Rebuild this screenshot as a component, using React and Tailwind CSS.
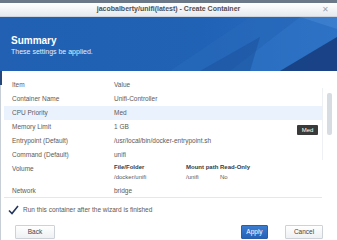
import React from "react";

const rows = [
  { item: "Container Name", value: "Unifi-Controller" },
  { item: "CPU Priority", value: "Med", active: true },
  { item: "Memory Limit", value: "1 GB" },
  { item: "Entrypoint (Default)", value: "/usr/local/bin/docker-entrypoint.sh" },
  { item: "Command (Default)", value: "unifi" },
];

const HeaderArt = () => (
  <svg className="absolute inset-0" width="337" height="54" viewBox="0 0 337 54" preserveAspectRatio="none">
    <defs>
      <linearGradient id="hb" x1="0" y1="0" x2="1" y2="0">
        <stop offset="0" stopColor="#2160b2" />
        <stop offset="0.6" stopColor="#2062b5" />
        <stop offset="1" stopColor="#2a6cc0" />
      </linearGradient>
    </defs>
    <rect width="337" height="54" fill="url(#hb)" />
    <polygon points="170,54 250,0 300,0 230,54" fill="#2869bb" opacity="0.6" />
    <polygon points="230,54 300,0 337,0 337,20 280,54" fill="#3277c8" opacity="0.55" />
    <polygon points="280,54 337,20 337,54" fill="#173f80" opacity="0.9" />
    <polygon points="300,0 337,0 337,12" fill="#4a8ad6" opacity="0.5" />
    <polygon points="200,54 260,20 250,54" fill="#1a4f9a" opacity="0.5" />
  </svg>
);

const Btn = ({ children, primary, className = "" }) => (
  <div
    className={`h-[14px] flex items-center justify-center text-[6.5px] rounded-[1px] border ${
      primary
        ? "bg-gradient-to-b from-[#3b7bd0] to-[#2663b8] border-[#2a5fa8] text-white"
        : "bg-gradient-to-b from-white to-[#eef0f3] border-[#cdd2d8] text-[#444]"
    } ${className}`}
  >
    {children}
  </div>
);

export default function App() {
  return (
    <div
      className="w-[337px] h-[240px] bg-white overflow-hidden relative text-[#5a5a5a]"
      style={{ fontFamily: '"Liberation Sans", Arial, sans-serif' }}
    >
      <div className="h-[3px] bg-[#6a7888]" />
      <div className="h-[14px] bg-gradient-to-b from-white to-[#e6eaee] flex items-center justify-center relative border-b border-[#cfd5dc]">
        <span className="text-[7px] font-bold text-[#505050]">jacobalberty/unifi(latest) - Create Container</span>
        <span className="absolute right-[8px] top-[1px] text-[8px] text-[#9aa3ad]">✕</span>
      </div>
      <div className="h-[54px] relative overflow-hidden">
        <HeaderArt />
        <div className="relative pl-[11px] pt-[18px] text-white">
          <div className="text-[10px] font-bold leading-[12px]">Summary</div>
          <div className="text-[7px] leading-[9px] text-[#e6eefa]">These settings be applied.</div>
        </div>
      </div>

      <div className="absolute left-0 top-[71px] w-[337px] h-[169px] border-l border-[#c8ced5]">
        <div className="absolute left-[-1px] top-0 w-[2px] h-[14px] bg-[#24477c]" />
        <div className="mx-[3px] mt-[7px] mr-[15px] border-b border-[#e4e8ec] text-[6.5px]">
          <div className="h-[14px] flex items-center">
            <span className="w-[110px] pl-[8px]">Item</span>
            <span>Value</span>
          </div>
          {rows.map((r) => (
            <div key={r.item} className={`h-[14px] flex items-center ${r.active ? "bg-[#eaf3fd]" : ""}`}>
              <span className="w-[110px] pl-[8px]">{r.item}</span>
              <span>{r.value}</span>
            </div>
          ))}
          <div className="h-[22px] flex">
            <span className="w-[110px] pl-[8px] pt-[2px]">Volume</span>
            <div className="flex flex-col whitespace-nowrap">
              <div className="flex h-[10px] items-center font-bold text-[6px] text-[#3a3a3a]">
                <span className="w-[72px]">File/Folder</span>
                <span className="w-[34px]">Mount path</span>
                <span>Read-Only</span>
              </div>
              <div className="flex h-[10px] items-center text-[6px]">
                <span className="w-[72px]">/docker/unifi</span>
                <span className="w-[34px]">/unifi</span>
                <span>No</span>
              </div>
            </div>
          </div>
          <div className="h-[13px] flex items-center">
            <span className="w-[110px] pl-[8px]">Network</span>
            <span>bridge</span>
          </div>
        </div>

        <div className="flex items-center gap-[4px] pl-[7px] mt-[6px] h-[12px] text-[6.5px]">
          <svg width="11" height="10" viewBox="0 0 11 10">
            <path d="M1 5.5 L4 8.5 L10 1" fill="none" stroke="#24365c" strokeWidth="1.6" />
          </svg>
          <span>Run this container after the wizard is finished</span>
        </div>

        <div className="flex items-center mt-[9px] pl-[14px] pr-[14px]">
          <Btn className="w-[40px]">Back</Btn>
          <div className="flex-1" />
          <Btn primary className="w-[27px]">Apply</Btn>
          <Btn className="w-[38px] ml-[17px]">Cancel</Btn>
        </div>
      </div>

      <div className="absolute left-[322px] top-[88px] w-px h-[72px] bg-[#eef1f4]" />
      <div className="absolute left-[327px] top-[93px] w-[5px] h-[42px] bg-[#d7dce2] rounded-[2px]" />
      <div className="absolute left-[297px] top-[125px] w-[21px] h-[10px] bg-[#3a3a3a] text-white text-[6px] flex items-center justify-center rounded-[1px]">
        Med
      </div>
    </div>
  );
}
